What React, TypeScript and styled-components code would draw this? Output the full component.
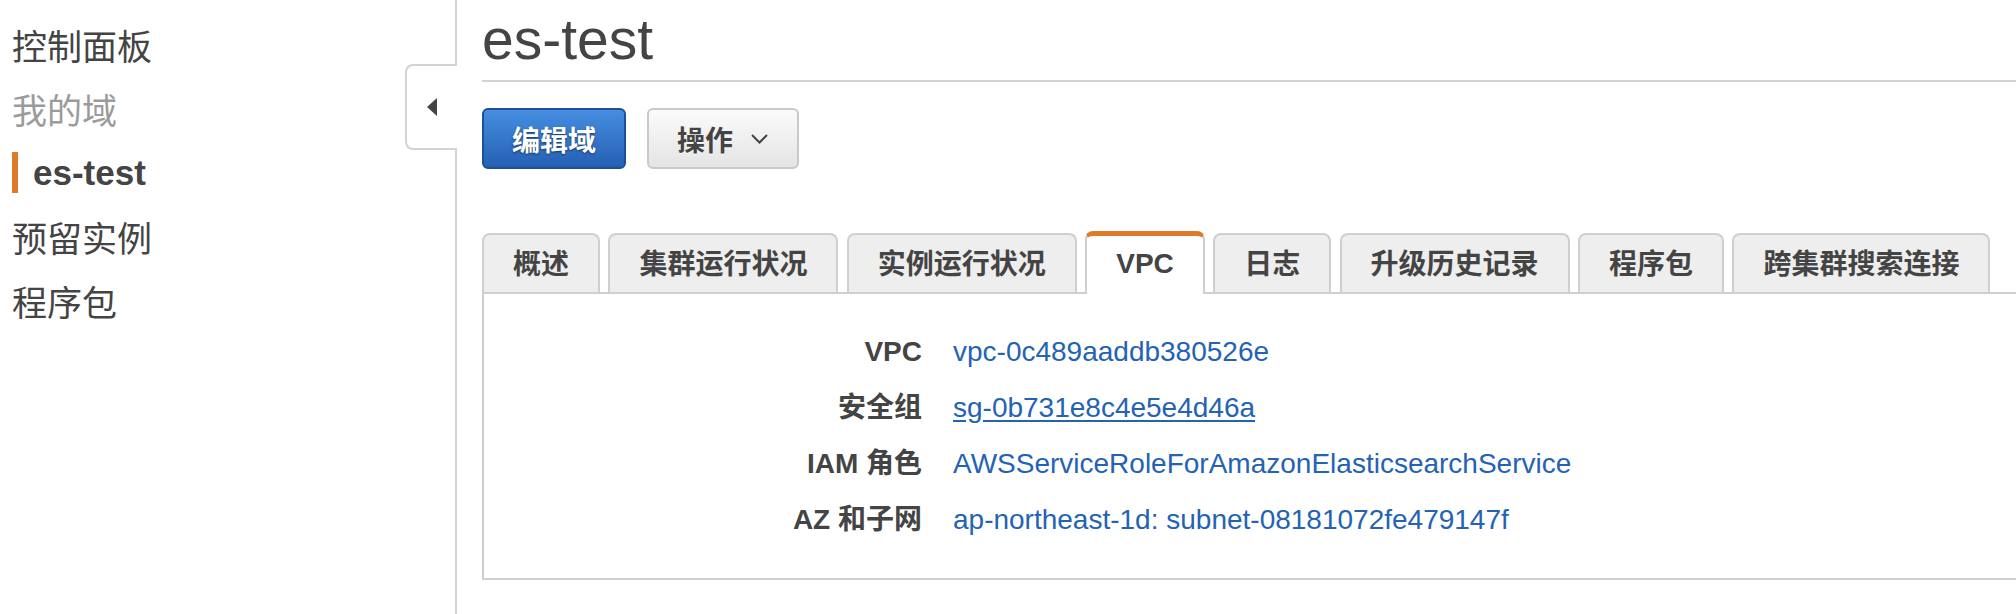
import React from "react";
import styled, { createGlobalStyle } from "styled-components";

const GlobalStyle = createGlobalStyle`
  html, body {
    margin: 0;
    padding: 0;
    background: #ffffff;
    overflow: hidden;
  }
  body {
    font-family: "Liberation Sans", Arial, "Noto Sans CJK SC", sans-serif;
    color: #444444;
  }
`;

const Layout = styled.div`
  display: flex;
  min-height: 100vh;
  width: 100%;
`;

const Sidebar = styled.aside`
  position: relative;
  flex: 0 0 457px;
  border-right: 2px solid #d3d3d3;
  padding-top: 12px;
  padding-left: 12px;
  box-sizing: border-box;
`;

const NavList = styled.ul`
  list-style: none;
  margin: 0;
  padding: 0;
`;

const NavItem = styled.li<{ $muted?: boolean }>`
  display: flex;
  align-items: center;
  height: 64px;
  font-size: 35px;
  color: ${(p) => (p.$muted ? "#9b9b9b" : "#444444")};
`;

const NavLabel = styled.span<{ $active?: boolean }>`
  display: inline-block;
  line-height: 41px;
  ${(p) =>
    p.$active &&
    `
    border-left: 6px solid #dd7b2b;
    padding-left: 15px;
    font-weight: bold;
  `}
`;

const CollapseTab = styled.button`
  position: absolute;
  top: 64px;
  right: -2px;
  width: 52px;
  height: 86px;
  box-sizing: border-box;
  background: #ffffff;
  border: 2px solid #d3d3d3;
  border-right: none;
  border-radius: 8px 0 0 8px;
  padding: 0;
  display: flex;
  align-items: center;
  justify-content: center;
  cursor: pointer;
`;

const Main = styled.main`
  flex: 1;
  padding-left: 25px;
  margin-right: -10px;
`;

const Header = styled.div`
  padding-top: 11px;
  padding-bottom: 13px;
  border-bottom: 2px solid #d3d3d3;
`;

const Title = styled.h1`
  margin: 0;
  font-size: 57px;
  line-height: 56px;
  font-weight: normal;
  color: #444444;
`;

const Toolbar = styled.div`
  display: flex;
  gap: 21px;
  margin-top: 26px;
`;

const Button = styled.button<{ $primary?: boolean }>`
  display: flex;
  align-items: center;
  height: 61px;
  box-sizing: border-box;
  border-radius: 6px;
  font-family: inherit;
  font-size: 28px;
  font-weight: bold;
  cursor: pointer;
  ${(p) =>
    p.$primary
      ? `
    padding: 0 28px;
    color: #ffffff;
    background: linear-gradient(to bottom, #468ee0, #2560b4);
    border: 2px solid #1f4f96;
    text-shadow: 0 1px 2px rgba(0, 0, 0, 0.55);
  `
      : `
    padding: 0 29px 0 28px;
    gap: 18px;
    color: #444444;
    background: linear-gradient(to bottom, #fbfbfb, #e4e4e4);
    border: 2px solid #c9c9c9;
    text-shadow: 0 1px 0 #ffffff;
  `}
`;

const Tabs = styled.div`
  margin-top: 62px;
`;

const TabList = styled.div`
  display: flex;
  gap: 8.4px;
  align-items: flex-end;
`;

const Tab = styled.div<{ $active?: boolean }>`
  box-sizing: border-box;
  height: ${(p) => (p.$active ? "63px" : "59px")};
  padding: ${(p) => (p.$active ? "14px 29px 0" : "16px 29px 0")};
  font-size: 28px;
  line-height: 28px;
  font-weight: bold;
  color: #444444;
  white-space: nowrap;
  border: 2px solid #cfcfcf;
  border-bottom: none;
  border-radius: 8px 8px 0 0;
  background: ${(p) => (p.$active ? "#ffffff" : "#eeeeee")};
  ${(p) =>
    p.$active &&
    `
    border-top: 5px solid #dd7b2b;
    margin-bottom: -2px;
    position: relative;
  `}
`;

const Panel = styled.div`
  border: 2px solid #cfcfcf;
  padding: 30px 0;
`;

const Row = styled.div`
  display: grid;
  grid-template-columns: 438px 1fr;
  column-gap: 31px;
  line-height: 56px;
  font-size: 28px;
`;

const Label = styled.div`
  text-align: right;
  font-weight: bold;
  color: #444444;
`;

const Value = styled.a<{ $underline?: boolean }>`
  color: #2463b4;
  text-decoration: ${(p) => (p.$underline ? "underline" : "none")};
  text-underline-offset: 3px;
  justify-self: start;
`;

const tabs = [
  "概述",
  "集群运行状况",
  "实例运行状况",
  "VPC",
  "日志",
  "升级历史记录",
  "程序包",
  "跨集群搜索连接",
];

const rows = [
  { label: "VPC", value: "vpc-0c489aaddb380526e" },
  { label: "安全组", value: "sg-0b731e8c4e5e4d46a", underline: true },
  { label: "IAM 角色", value: "AWSServiceRoleForAmazonElasticsearchService" },
  { label: "AZ 和子网", value: "ap-northeast-1d: subnet-08181072fe479147f" },
];

const App: React.FC = () => {
  return (
    <>
      <GlobalStyle />
      <Layout>
        <Sidebar>
          <NavList>
            <NavItem>控制面板</NavItem>
            <NavItem $muted>我的域</NavItem>
            <NavItem>
              <NavLabel $active>es-test</NavLabel>
            </NavItem>
            <NavItem>预留实例</NavItem>
            <NavItem>程序包</NavItem>
          </NavList>
          <CollapseTab aria-label="收起">
            <svg width="11" height="18" viewBox="0 0 11 18">
              <polygon points="10,0 10,18 0,9" fill="#444444" />
            </svg>
          </CollapseTab>
        </Sidebar>

        <Main>
          <Header>
            <Title>es-test</Title>
          </Header>

          <Toolbar>
            <Button $primary>编辑域</Button>
            <Button>
              操作
              <svg width="17" height="10" viewBox="0 0 17 10">
                <polyline
                  points="1,1 8.5,8.5 16,1"
                  fill="none"
                  stroke="#444444"
                  strokeWidth="2"
                />
              </svg>
            </Button>
          </Toolbar>

          <Tabs>
            <TabList>
              {tabs.map((t) => (
                <Tab key={t} $active={t === "VPC"}>
                  {t}
                </Tab>
              ))}
            </TabList>
            <Panel>
              {rows.map((r) => (
                <Row key={r.label}>
                  <Label>{r.label}</Label>
                  <Value href="#" $underline={r.underline}>
                    {r.value}
                  </Value>
                </Row>
              ))}
            </Panel>
          </Tabs>
        </Main>
      </Layout>
    </>
  );
};

export default App;
